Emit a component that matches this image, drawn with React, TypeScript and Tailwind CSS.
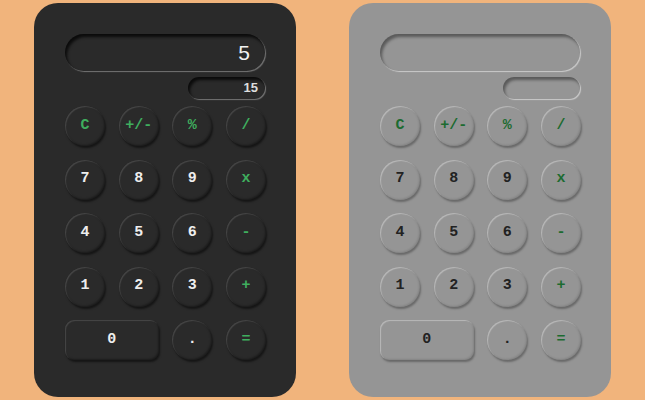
import React from 'react';

type Theme = 'dark' | 'light';

const keys: { label: string; op?: boolean; wide?: boolean }[] = [
  { label: 'C', op: true },
  { label: '+/-', op: true },
  { label: '%', op: true },
  { label: '/', op: true },
  { label: '7' },
  { label: '8' },
  { label: '9' },
  { label: 'x', op: true },
  { label: '4' },
  { label: '5' },
  { label: '6' },
  { label: '-', op: true },
  { label: '1' },
  { label: '2' },
  { label: '3' },
  { label: '+', op: true },
  { label: '0', wide: true },
  { label: '.' },
  { label: '=', op: true },
];

const Calculator: React.FC<{ theme: Theme; value?: string; memory?: string }> = ({ theme, value, memory }) => {
  const dark = theme === 'dark';
  const panel = dark ? 'bg-[#2a2a2a]' : 'bg-[#959595]';
  const display = dark
    ? 'shadow-[inset_2px_3px_3px_rgba(0,0,0,0.75),1px_1px_1px_rgba(255,255,255,0.35)]'
    : 'shadow-[inset_2px_3px_3px_rgba(0,0,0,0.4),1px_1px_1px_rgba(255,255,255,0.5)]';
  const btn = dark
    ? 'shadow-[inset_1px_1px_1px_rgba(255,255,255,0.14),inset_-1px_-1px_2px_rgba(0,0,0,0.35),1px_2px_2px_rgba(0,0,0,0.5)]'
    : 'shadow-[inset_1px_1px_1px_rgba(255,255,255,0.35),inset_-1px_-1px_2px_rgba(0,0,0,0.12),1px_2px_2px_rgba(0,0,0,0.3)]';
  const digit = dark ? 'text-[#eeeeee]' : 'text-[#222222]';
  const op = dark ? 'text-[#3fae5e]' : 'text-[#1c6b30]';

  return (
    <div className={`w-[262px] h-[394px] rounded-[24px] pl-[31px] pt-[31px] ${panel}`}>
      <div
        className={`w-[200px] h-[37px] rounded-full flex items-center justify-end pr-[15px] text-[21px] text-[#f2f2f2] ${display}`}
        style={{ fontFamily: '"Liberation Sans", Arial, sans-serif' }}
      >
        {value}
      </div>
      <div className="w-[200px] flex justify-end mt-[6px]">
        <div
          className={`w-[77px] h-[22px] rounded-full flex items-center justify-end pr-[7px] text-[13px] font-bold text-[#dddddd] ${display}`}
          style={{ fontFamily: '"Liberation Sans", Arial, sans-serif' }}
        >
          {memory}
        </div>
      </div>
      <div
        className="mt-[7px] w-[201px] grid grid-cols-[repeat(4,40px)] justify-between gap-y-[13.5px]"
        style={{ fontFamily: '"Liberation Mono", "DejaVu Sans Mono", monospace' }}
      >
        {keys.map((k) => (
          <div
            key={k.label}
            className={`h-[40px] flex items-center justify-center text-[15px] font-bold ${btn} ${
              k.wide ? 'col-span-2 rounded-[9px]' : 'rounded-full'
            } ${k.op ? op : digit}`}
          >
            {k.label}
          </div>
        ))}
      </div>
    </div>
  );
};

export default function App() {
  return (
    <div className="w-[645px] h-[400px] bg-[#f1b47c] flex items-center justify-center gap-[53px]">
      <Calculator theme="dark" value="5" memory="15" />
      <Calculator theme="light" />
    </div>
  );
}
